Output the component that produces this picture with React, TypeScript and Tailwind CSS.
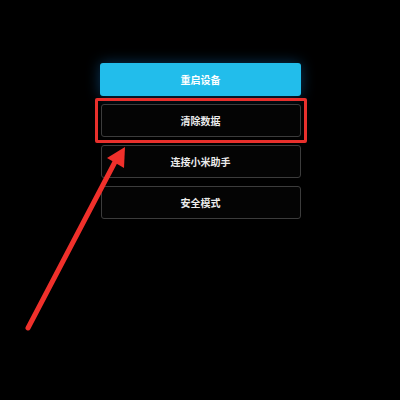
const font = { fontFamily: '"Noto Sans CJK SC", "Noto Sans", sans-serif' }

function MenuButton({ label, primary }: { label: string; primary?: boolean }) {
  if (primary) {
    return (
      <div className="h-[33px] w-[201px] rounded-[3px] bg-[#22bdeb] shadow-[0_0_14px_rgba(20,120,200,0.45)] flex items-center justify-center text-[10px] font-bold text-white">
        {label}
      </div>
    )
  }
  return (
    <div className="h-[33px] w-[200px] rounded-[3px] border border-[#3c3c3c] bg-[#040404] flex items-center justify-center text-[10px] font-bold text-[#ececec]">
      {label}
    </div>
  )
}

export default function App() {
  return (
    <div className="relative w-[400px] h-[400px] bg-black overflow-hidden" style={font}>
      <div className="flex flex-col items-center pt-[63px] gap-[8px] pl-[1px]">
        <MenuButton label="重启设备" primary />
        <div className="relative">
          <MenuButton label="清除数据" />
          <div className="absolute -left-[6px] -right-[6px] -top-[6px] -bottom-[6px] border-[3px] border-[#e8302c] rounded-[2px]" />
        </div>
        <MenuButton label="连接小米助手" />
        <MenuButton label="安全模式" />
      </div>

      {/* annotation arrow */}
      <svg className="absolute inset-0" width="400" height="400" viewBox="0 0 400 400">
        <line x1="28" y1="328" x2="116" y2="160" stroke="#f0302b" strokeWidth="5" strokeLinecap="round" />
        <polygon points="125,147 124,168 107,158" fill="#f0302b" />
      </svg>
    </div>
  )
}
